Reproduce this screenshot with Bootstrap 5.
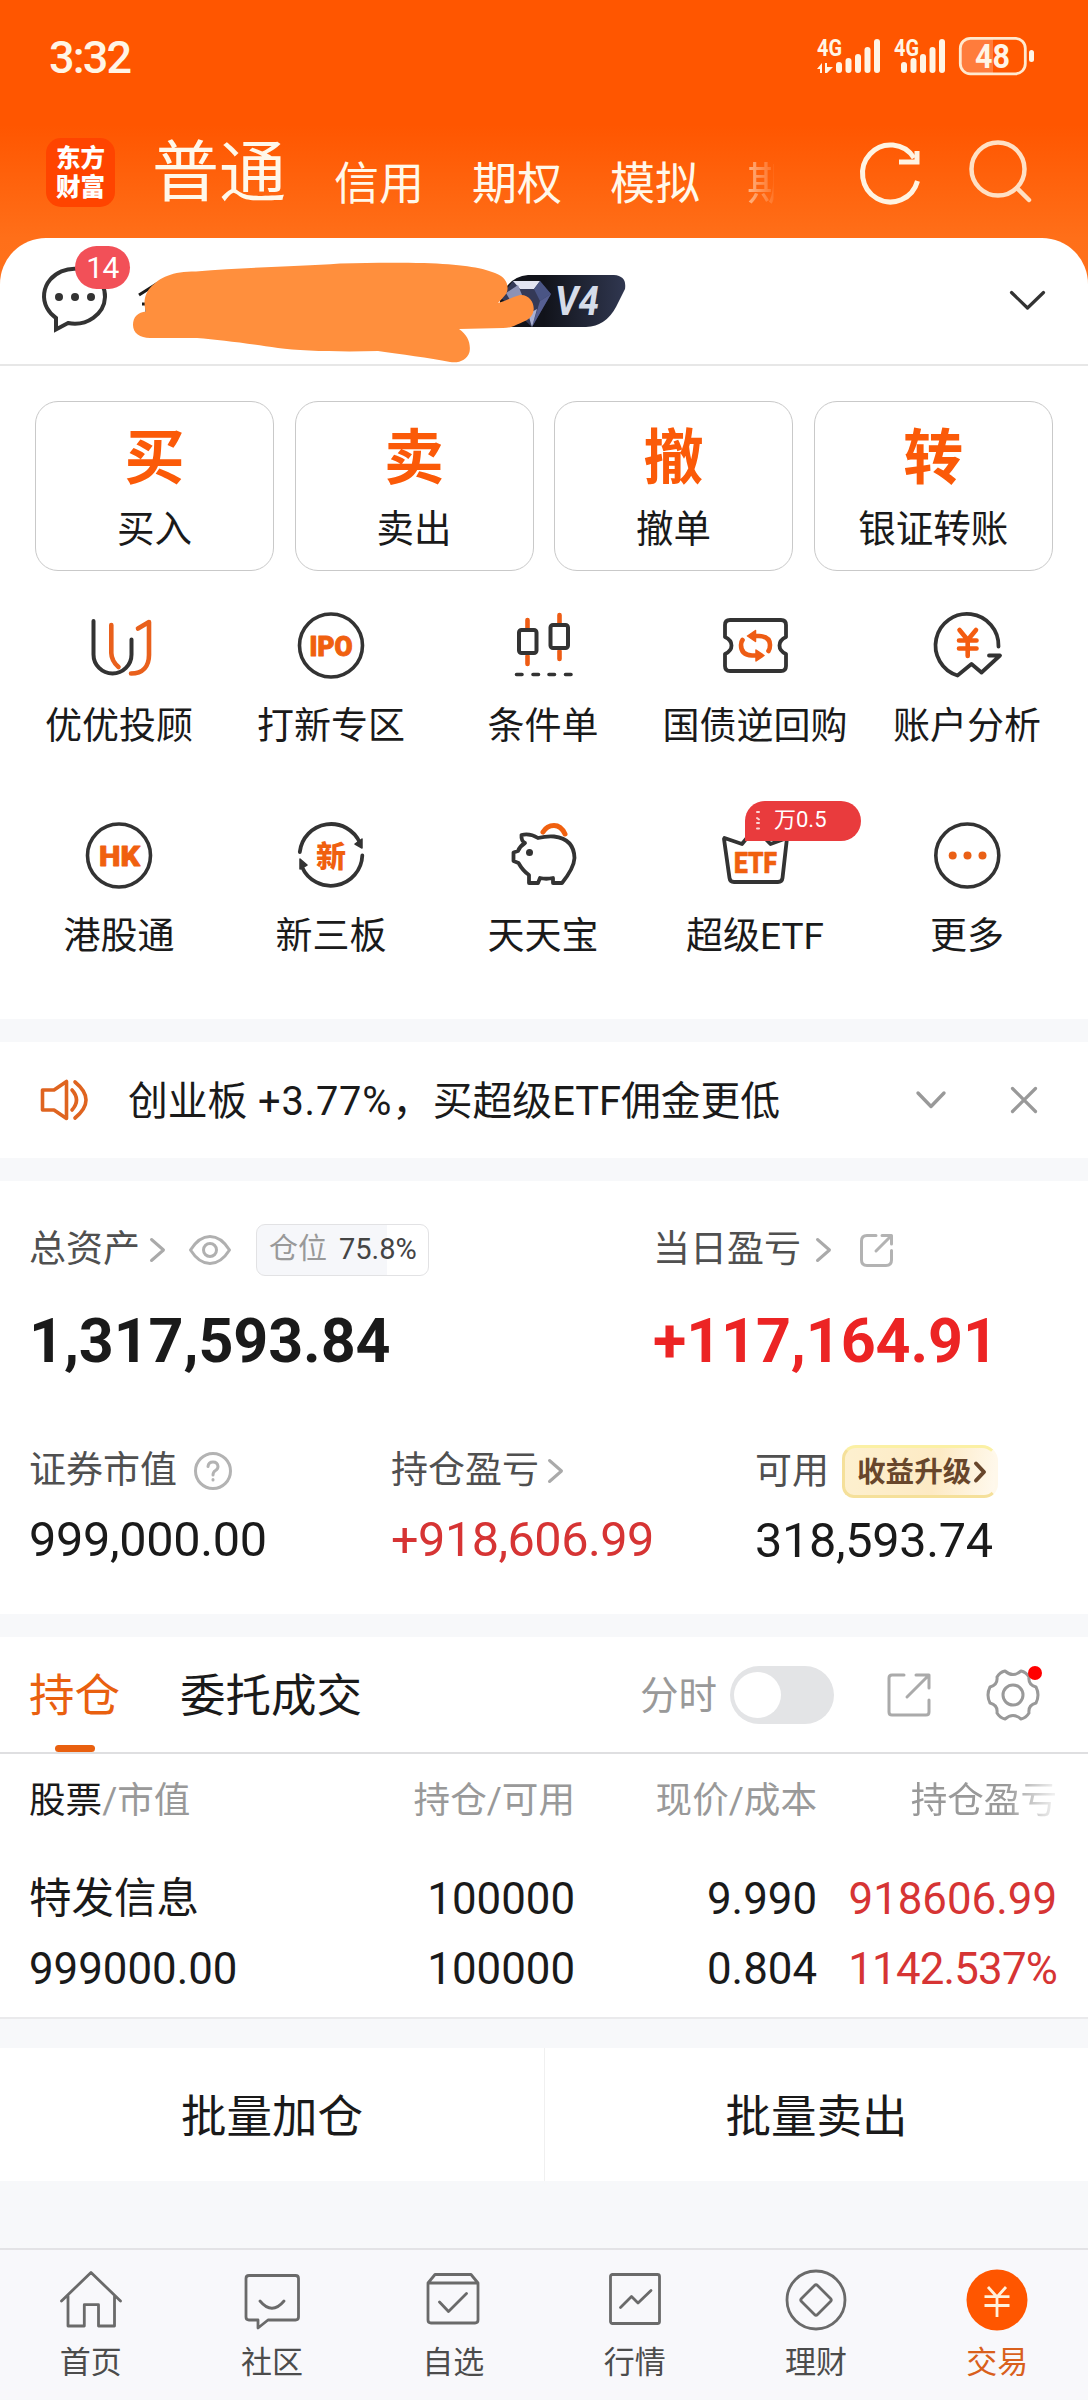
<!DOCTYPE html>
<html lang="zh-CN">
<head>
<meta charset="utf-8">
<meta name="viewport" content="width=device-width, initial-scale=1">
<title>东方财富 - 交易</title>
<link rel="stylesheet" href="https://cdn.jsdelivr.net/npm/bootstrap@5.3.0/dist/css/bootstrap.min.css">
<style>
:root{--o:#f65c0d;--ink:#1a1a1a;--g6:#505050;--g9:#999}
body{font-family:Roboto,"Noto Sans CJK SC",sans-serif;color:var(--ink);background:#f7f8fa;width:1088px;height:2400px;overflow:hidden;-webkit-font-smoothing:antialiased}
svg{display:block;flex:none;overflow:visible;fill:none;stroke-linecap:round;stroke-linejoin:round}
.top-zone{height:290px;background:linear-gradient(#ff5600 0 125px,#ff6f19 238px,#ff721c)}
.status-line{height:114px;padding:0 54px 0 49px}
.clock{font-size:45px;font-weight:500;letter-spacing:-1.8px;line-height:60px;margin-top:28px;color:#fff5e6}
.title-line{height:124px;padding:26px 0 0 46px;color:#fff8ea}
.logo-tile{width:69px;height:69px;margin-top:-2px;border-radius:15px;background:#ff4400;font-size:24.5px;line-height:29px;font-weight:900;color:#fff;padding-top:6px}
.tab-main{font-size:67px;line-height:66px;margin-left:37px;font-weight:400}
.tab-sub{font-size:45px;line-height:50px;margin-top:20px}
.tab-fade{-webkit-mask-image:linear-gradient(90deg,rgba(0,0,0,.55),rgba(0,0,0,.12) 26px,transparent 27px);mask-image:linear-gradient(90deg,rgba(0,0,0,.55),rgba(0,0,0,.12) 26px,transparent 27px)}
.sheet{margin-top:-52px;border-radius:46px 46px 0 0;height:781px}
.user-line{height:128px;border-bottom:2px solid #e7e7e7}
.msg-badge{left:75px;top:8px;width:55px;height:43px;border-radius:22px;background:#f25058;color:#fff;font-size:30px;line-height:44px;letter-spacing:-.5px}
.vip-tag{left:500px;top:37px;width:126px;height:52px}
.scribble{left:130px;top:20px}
.quick-set{padding:35px 35px 0;gap:20.5px}
.quick-box{height:170px;border:1px solid #c9c9c9;border-radius:23px}
.quick-glyph{font-size:60px;line-height:66px;font-weight:700;color:#fb5a08;margin-top:24px}
.quick-name{font-size:37.5px;line-height:50px;margin-top:12px}
.fn-set{padding:38px 15px 0 13px}
.fn-set+.fn-set{padding-top:67px}
.fn-name{font-size:37px;line-height:50px;margin-top:21px;white-space:nowrap}
.fn-flag{left:96px;top:-18px;width:116px;height:40px;border-radius:20px 20px 20px 0;background:#e93b3d;color:#fff;font-size:22px;line-height:38px;padding-left:29px}
.notice{height:116px;margin-top:23px;padding:0 51px 0 40px}
.notice-text{font-size:39.8px;line-height:56px;margin:3px 0 0 40px;white-space:nowrap}
.notice-text span{letter-spacing:.8px}
.assets{height:433px;margin-top:23px;padding:43px 0 0 29px}
.lab{font-size:37px;line-height:52px;color:var(--g6);white-space:nowrap}
.big-num{font-size:61px;line-height:70px;font-weight:700;margin-top:30px;letter-spacing:-.1px}
.mid-num{font-size:48.6px;line-height:60px;margin-top:13px;letter-spacing:-.3px}
.up{color:#ec2424}.up2{color:#d63434}
.pos-tag{margin-left:25px;width:173px;height:52px;border:1.5px solid #e2e2e4;border-radius:9px;background:linear-gradient(90deg,#f6f7fa 76%,#fff 76%);padding-left:12px;font-size:29px;line-height:48px;color:var(--g9)}
.gain-tag{margin-left:13px;width:156px;height:53px;border-radius:14px 16px 14px 12px;border:3px solid #f5e09a;border-top-color:#fbf0a4;border-right-color:#fff8ea;background:linear-gradient(100deg,#fdf0cf,#fdeac4 60%,#fff9ee);color:#68462b;font-weight:700;font-size:28.6px;line-height:46px;padding-left:12px}
.asset-row2{padding-top:69px}
.holdings{height:382px;margin-top:23px;border-bottom:2px solid #eaeaec}
.hold-head{height:117px;border-bottom:2px solid #dfdfe1;padding:0 48px 0 29px}
.hold-tab{font-size:45.5px;line-height:60px;margin-top:4px}
.hold-tab.on{color:#e9600f}
.hold-tab.on::after{content:"";left:26px;top:78px;width:40px;height:7px;border-radius:4px;background:#e9600f;position:absolute}
.toggle{width:104px;height:58px;border-radius:29px;background:#e3e4e6;padding:6px 4px}
.toggle i{display:block;width:47px;height:46px;border-radius:50%;background:#fff}
.hold-grid{display:grid;grid-template-columns:302px 244px 242px 240px;padding-left:29px}
.hold-grid>*{text-align:right;white-space:nowrap}
.hold-grid>:first-child{text-align:left}
.cap-row{font-size:36.6px;line-height:50px;color:var(--g9);margin-top:22px}
.fade-out{-webkit-mask-image:linear-gradient(90deg,#000 65%,rgba(0,0,0,.1));mask-image:linear-gradient(90deg,#000 65%,rgba(0,0,0,.1))}
.val-row{font-size:43.8px;line-height:60px}
.batch{height:133px;margin-top:29px;font-size:45.5px;line-height:140px}
.batch>div{height:133px}
.batch>div+div{border-left:1px solid #f0f0f0}
.dock{height:151px;margin-top:67px;border-top:2px solid #e3e3e6;background:#f8f8fb;color:#4c4c4c;font-size:31px;line-height:40px}
.dock svg{margin:18px auto 11px}
.dock .on{color:#d9601c}
</style>
</head>
<body>
<header class="top-zone">
  <div class="status-line d-flex justify-content-between">
    <div class="clock">3:32</div>
    <svg width="218" height="114" viewBox="816 0 218 114">
      <g fill="#fff5e6" font-family="Roboto" font-weight="700" font-size="24">
        <text x="817" y="56" textLength="25" lengthAdjust="spacingAndGlyphs">4G</text><text x="894" y="56" textLength="25" lengthAdjust="spacingAndGlyphs">4G</text>
        <path d="M817 69L822 63V73H820V69ZM825 63H827V67L833 67L827 73H825Z"/>
        <rect x="836" y="62" width="6" height="11" rx="3"/><rect x="845.500" y="58" width="6" height="15" rx="3"/><rect x="855" y="54" width="6" height="19" rx="3"/><rect x="864.500" y="47" width="6" height="26" rx="3"/><rect x="874" y="39" width="6" height="34" rx="3"/>
        <rect x="901" y="62" width="6" height="11" rx="3"/><rect x="910.500" y="58" width="6" height="15" rx="3"/><rect x="920" y="54" width="6" height="19" rx="3"/><rect x="929.500" y="47" width="6" height="26" rx="3"/><rect x="939" y="39" width="6" height="34" rx="3"/>
        <path d="M993 38V74H971a10 10 0 0 1-10-10V48a10 10 0 0 1 10-10Z" fill="#ff7c3c"/>
        <rect x="1029" y="50" width="5" height="12" rx="2.500"/>
        <text x="975" y="68" font-size="34" textLength="35" lengthAdjust="spacingAndGlyphs">48</text>
      </g>
      <rect x="960.300" y="38.300" width="65" height="35.500" rx="10" stroke="#ffe9cf" stroke-width="2.800"/>
    </svg>
  </div>
  <div class="title-line d-flex align-items-start">
    <div class="logo-tile text-center">东方<br>财富</div>
    <div class="tab-main">普通</div>
    <div class="tab-sub" style="margin-left:48px">信用</div>
    <div class="tab-sub" style="margin-left:48px">期权</div>
    <div class="tab-sub" style="margin-left:48px">模拟</div>
    <div class="tab-sub tab-fade" style="margin-left:47px">期</div>
    <svg width="62" height="66" viewBox="859 141 62 66" style="margin-left:67px" stroke="#fff3e2" stroke-width="5"><path d="M917.500 182A28 28.500 0 1 1 914 159" stroke-linecap="butt"/><path d="M917 152V163H899" stroke-linecap="butt" stroke-linejoin="miter"/></svg>
    <svg width="64" height="66" viewBox="968 141 64 66" style="margin-left:47px" stroke="#ffe0c4" stroke-width="4.500"><circle cx="998" cy="170" r="26.500"/><path d="M1017 189L1029 201"/></svg>
  </div>
</header>

<main>
<section class="sheet bg-white position-relative">
  <div class="user-line position-relative">
    <svg class="position-absolute" style="left:40px;top:24px" width="70" height="74" viewBox="40 262 70 74" stroke="#333" stroke-width="4"><path d="M56 329.500V318A30.500 27.500 0 1 1 105 297A30.500 27.500 0 0 1 68 323Z" stroke-linejoin="miter"/><g fill="#333" stroke="none"><circle cx="59" cy="297" r="4"/><circle cx="75" cy="297" r="4"/><circle cx="91" cy="297" r="4"/></g></svg>
    <div class="msg-badge position-absolute text-center">14</div>
    <svg class="vip-tag position-absolute" viewBox="500 275 126 52">
      <defs><linearGradient id="tagfill"><stop offset=".35" stop-color="#11131a"/><stop offset="1" stop-color="#303750"/></linearGradient></defs>
      <path d="M528 275H614Q627 276 625 289L616 307Q606 326 586 327H500V300Q507 277 528 275Z" fill="url(#tagfill)"/>
      <path d="M513 281H540L551 294L532 327L500 297Z" fill="#343957"/>
      <path d="M513 281H540L534 289H520Z" fill="#e2e4f2"/><path d="M506 293L518 285L524 300L510 300Z" fill="#8d92b5"/><path d="M534 289L540 281L551 294L540 301Z" fill="#4a5585"/><path d="M540 301L551 294L532 327Z" fill="#565f92"/><path d="M528 314L537 309L532 327Z" fill="#aab0d2"/>
      <text x="555" y="315" font-family="Roboto" font-size="40" font-style="italic" font-weight="700" fill="#d6dce9" textLength="44" lengthAdjust="spacingAndGlyphs">V4</text>
    </svg>
    <svg class="scribble position-absolute" width="410" height="108" viewBox="130 258 410 108">
      <path d="M139 295L158 283M142 304H148M147 308V313" stroke="#1a1a1a" stroke-width="3" stroke-linecap="butt"/>
      <path fill="#ff8f3d" d="M146 311.500C144 306 143 296 150 288C160 277 172 271.500 196 271.500C250 267 300 266.500 340 263.500C370 262.500 400 262.500 424 263C460 264.500 480 267 495 273C509 278 509 289 506 294Q502 299 498 303C506 301 512 297 520 295C529 294 535 303 533.500 311C532 320 522 322 514 326Q509 328 503 328L459 329C468 335 471 344 469.500 352C467 360 459 363.500 450 362C430 358 400 354 378 351C340 352 300 351 278 348C245 343 220 340 197 338L150 338C140 338 133 333 133 325C133 317 138 312 146 311.500Z"/>
    </svg>
    <svg class="position-absolute" style="left:1009px;top:51px" width="38" height="22" viewBox="1009 289 38 22" stroke="#333" stroke-width="3.200"><path d="M1011.500 292.500L1027.500 308L1043.500 292.500"/></svg>
  </div>

  <div class="quick-set d-flex text-center">
    <div class="quick-box flex-fill"><div class="quick-glyph">买</div><div class="quick-name">买入</div></div>
    <div class="quick-box flex-fill"><div class="quick-glyph">卖</div><div class="quick-name">卖出</div></div>
    <div class="quick-box flex-fill"><div class="quick-glyph">撤</div><div class="quick-name">撤单</div></div>
    <div class="quick-box" style="width:239.500px"><div class="quick-glyph">转</div><div class="quick-name">银证转账</div></div>
  </div>

  <div class="fn-set row g-0 row-cols-5 text-center">
    <div class="col"><svg class="mx-auto" width="72" height="72" stroke-width="4"><path stroke="#333" d="M10.500 12V45.500a19 19 0 0 0 38 0V30.500"/><path stroke="#e9601c" stroke-width="4.600" d="M28.300 16V44Q28.500 52 35.500 58M48 64.500C60 64.500 66 57 66 46V13L55 19.500"/></svg><div class="fn-name">优优投顾</div></div>
    <div class="col"><svg class="mx-auto" width="72" height="72"><circle cx="36" cy="36.500" r="31.500" stroke="#333" stroke-width="3.600"/><text x="14.500" y="46.500" font-family="Roboto" font-weight="900" font-size="28" textLength="43" lengthAdjust="spacingAndGlyphs" fill="#f0600f" stroke="#f0600f" stroke-width="1">IPO</text></svg><div class="fn-name">打新专区</div></div>
    <div class="col"><svg class="mx-auto" width="72" height="72" stroke-width="4"><g stroke="#ee5c14" stroke-width="4.600"><path d="M20.500 11V20M20.500 47V55M52.500 6V15M52.500 42V50"/></g><g stroke="#333"><rect x="12" y="21" width="17.500" height="23" rx="2.500"/><rect x="43.500" y="16" width="17.500" height="23" rx="2.500"/><path d="M9.500 65.500H15M26 65.500H31.500M42 65.500H47.500M58.500 65.500H64" stroke-width="3.600"/></g></svg><div class="fn-name">条件单</div></div>
    <div class="col"><svg class="mx-auto" width="72" height="72" stroke-width="3.800"><path stroke="#333" d="M11 11H62Q67 11 67 16V28Q60.500 31 60.500 36.500T67 45V57Q67 62 62 62H11Q6 62 6 57V45Q12.500 42 12.500 36.500T6 28V16Q6 11 11 11Z"/><g stroke="#ee5c14" stroke-width="4.600"><path d="M34 27H40Q51 27.500 51 36Q51 40 49.500 42M38 46.500H33Q22 46 22 36Q22 33 23.500 31"/></g><path fill="#ee5c14" stroke="#ee5c14" stroke-width="1.500" d="M36.500 21.500V32.500L28.500 27ZM37 41V52L45 46.500Z"/></svg><div class="fn-name">国债逆回购</div></div>
    <div class="col"><svg class="mx-auto" width="72" height="72" stroke-width="3.800"><path stroke="#333" d="M67.500 37.500A31.500 31.500 0 1 0 26.500 66.500L40.500 55L50.500 63.500L69 46.500H58"/><path stroke="#f45c10" stroke-width="4.600" d="M28.500 21L36.700 31L45 21M36.700 31V47M28 31.500H45.500M28 39.500H45.500"/></svg><div class="fn-name">账户分析</div></div>
  </div>
  <div class="fn-set row g-0 row-cols-5 text-center">
    <div class="col"><svg class="mx-auto" width="72" height="72"><circle cx="36" cy="36.500" r="31.500" stroke="#333" stroke-width="3.600"/><text x="16" y="46.500" font-family="Roboto" font-weight="900" font-size="28" textLength="41" lengthAdjust="spacingAndGlyphs" fill="#f0600f" stroke="#f0600f" stroke-width=".8">HK</text></svg><div class="fn-name">港股通</div></div>
    <div class="col"><svg class="mx-auto" width="72" height="72"><g stroke="#333" stroke-width="3.800"><path d="M4.800 33A31.500 31.500 0 0 1 65 24M67.300 36.500A31.500 31.500 0 0 1 7 48"/></g><path fill="#333" stroke="#333" stroke-width="1.500" d="M60 25L67 20V29ZM5 40L12 46L5 50Z"/><text x="36" y="47.500" text-anchor="middle" font-family="Noto Sans CJK SC" font-weight="900" font-size="30" fill="#f0600f">新</text></svg><div class="fn-name">新三板</div></div>
    <div class="col"><svg class="mx-auto" width="72" height="72" stroke-width="3.800"><path stroke="#333" d="M18 24Q14 22 14.500 16Q23 14 31 19Q39 17 47 17.500Q67 20 67.500 39Q67 49 55 64H46V59Q39 60.500 33 59L31 64H22V56Q16 52 11.500 44L6.500 42V33.500L11 32Q13 27 18 24Z"/><circle cx="22.500" cy="33.500" r="3.500" fill="#333"/><path stroke="#f0600f" stroke-width="5" d="M36 13Q40 6.500 47 6.500T58 15"/></svg><div class="fn-name">天天宝</div></div>
    <div class="col position-relative"><svg class="mx-auto" width="72" height="72"><path stroke="#333" stroke-width="3.800" d="M5.500 19L23 25L36 9L51.500 25L68 19L63.500 59Q63 63 59 63H15Q11 63 10.500 59L5 20"/><text x="15" y="53.500" font-family="Roboto" font-weight="900" font-size="29.500" textLength="43" lengthAdjust="spacingAndGlyphs" fill="#f0600f" stroke="#f0600f" stroke-width=".6">ETF</text></svg><div class="fn-name">超级ETF</div><div class="fn-flag position-absolute text-start">万0.5<svg class="position-absolute" style="left:11px;top:10px" width="4" height="19" stroke="#fbd5d5" stroke-width="2"><path d="M1 1H3M1 7L3 8.500M1 12H3M1 17.500H3"/></svg></div></div>
    <div class="col"><svg class="mx-auto" width="72" height="72"><circle cx="36.300" cy="36.500" r="31.500" stroke="#333" stroke-width="3.600"/><g fill="#ea6016"><circle cx="21.700" cy="36.500" r="4"/><circle cx="36.500" cy="36.500" r="4"/><circle cx="51.500" cy="36.500" r="4"/></g></svg><div class="fn-name">更多</div></div>
  </div>
</section>

<section class="notice bg-white d-flex align-items-center">
  <svg width="48" height="44" viewBox="40 1078 48 44" stroke="#df6420" stroke-width="3.600"><path d="M42.500 1090H54L66.500 1081.500V1118.500L54 1110H42.500ZM72 1090Q81 1100 72 1110M75 1082Q97 1100 75 1118"/></svg>
  <div class="notice-text">创业板<span> +3.77%，</span>买超级ETF佣金更低</div>
  <svg class="ms-auto" width="30" height="18" stroke="#999" stroke-width="3.400"><path d="M2 2L15 15.500L28 2"/></svg>
  <svg width="26" height="26" style="margin-left:65px" stroke="#999" stroke-width="3.200"><path d="M1.500 1.500L24.500 24.500M24.500 1.500L1.500 24.500"/></svg>
</section>

<section class="assets bg-white">
  <div class="d-flex">
    <div style="width:624px">
      <div class="d-flex align-items-center lab">总资产
        <svg width="15" height="24" style="margin-left:10px" stroke="#aaa" stroke-width="3"><path d="M1.500 1.500L13.500 12L1.500 22.500"/></svg>
        <svg width="42" height="30" style="margin-left:24px" stroke="#b0b0b0" stroke-width="3"><path d="M1.500 15Q10 1.500 21 1.500T40.500 15Q32 28.500 21 28.500T1.500 15Z"/><circle cx="21" cy="15" r="6.500"/></svg>
        <div class="pos-tag">仓位<span style="margin-left:12px;color:#444">75.8%</span></div>
      </div>
      <div class="big-num">1,317,593.84</div>
    </div>
    <div>
      <div class="d-flex align-items-center lab">当日盈亏
        <svg width="15" height="24" style="margin-left:15px" stroke="#aaa" stroke-width="3"><path d="M1.500 1.500L13.500 12L1.500 22.500"/></svg>
        <svg width="33" height="33" style="margin-left:29px" stroke="#b3b3b3" stroke-width="3"><path d="M16 1.500H7Q1.500 1.500 1.500 7V26Q1.500 31.500 7 31.500H26Q31.500 31.500 31.500 26V16.500M22 1.500H31.500V10M31 2L16 17"/></svg>
      </div>
      <div class="big-num up">+117,164.91</div>
    </div>
  </div>
  <div class="d-flex asset-row2">
    <div style="width:362px">
      <div class="d-flex align-items-center lab">证券市值<svg width="38" height="38" style="margin-left:17px" stroke="#b3b3b3" stroke-width="3"><circle cx="19" cy="19" r="17.500"/><path d="M14 14.500Q14.500 10 19 10T24 14.500Q24 17 21.500 18.500T19 23M19 27.500V28"/></svg></div>
      <div class="mid-num">999,000.00</div>
    </div>
    <div style="width:364px">
      <div class="d-flex align-items-center lab">持仓盈亏<svg width="15" height="24" style="margin-left:9px" stroke="#aaa" stroke-width="3"><path d="M1.500 1.500L13.500 12L1.500 22.500"/></svg></div>
      <div class="mid-num up2" style="letter-spacing:-.5px">+918,606.99</div>
    </div>
    <div>
      <div class="d-flex align-items-center lab">可用<div class="gain-tag d-flex align-items-center">收益升级<svg width="12" height="20" style="margin-left:3px" stroke="#68462b" stroke-width="4"><path d="M2 1.500L10 10L2 18.500"/></svg></div></div>
      <div class="mid-num">318,593.74</div>
    </div>
  </div>
</section>

<section class="holdings bg-white">
  <div class="hold-head d-flex align-items-center">
    <div class="hold-tab on position-relative">持仓</div>
    <div class="hold-tab" style="margin-left:60px">委托成交</div>
    <div class="ms-auto" style="font-size:38.500px;color:#999;margin-top:3px">分时</div>
    <div class="toggle" style="margin-left:13px"><i></i></div>
    <svg width="44" height="44" style="margin-left:53px" stroke="#aaa" stroke-width="3"><path d="M17 2H5Q2 2 2 5V39Q2 42 5 42H39Q42 42 42 39V27M29 2H42V15M41 3L20 24"/></svg>
    <svg width="54" height="54" viewBox="-27 -27 54 54" style="margin-left:55px" stroke="#999" stroke-width="3"><path d="M-8 -24Q0 -17 8 -24Q13 -23 16 -18Q15 -10 23 -8Q27 0 23 8Q15 10 16 18Q13 23 8 24Q0 17 -8 24Q-13 23 -16 18Q-15 10 -23 8Q-27 0 -23 -8Q-15 -10 -16 -18Q-13 -23 -8 -24Z"/><circle r="10"/><circle cx="22" cy="-22" r="7" fill="#f00" stroke="none"/></svg>
  </div>
  <div class="hold-grid cap-row"><div><span style="color:#1a1a1a">股票</span>/市值</div><div>持仓/可用</div><div>现价/成本</div><div><span class="fade-out d-inline-block">持仓盈亏</span></div></div>
  <div class="hold-grid val-row" style="margin-top:43px"><div style="font-size:42.500px">特发信息</div><div>100000</div><div>9.990</div><div class="up2">918606.99</div></div>
  <div class="hold-grid val-row" style="margin-top:10px"><div>999000.00</div><div>100000</div><div>0.804</div><div class="up2" style="letter-spacing:-.8px">1142.537%</div></div>
</section>

<section class="batch bg-white d-flex text-center"><div class="w-50">批量加仓</div><div class="w-50">批量卖出</div></section>
</main>

<nav class="dock row g-0 row-cols-6 text-center">
  <div class="col"><svg width="64" height="64" stroke="#6a6a6a" stroke-width="2.800"><path d="M2.500 33L32 4.500L61.500 33M9 28V58H25.300V36.700H39.500V58H55.500V28"/></svg>首页</div>
  <div class="col"><svg width="64" height="64" stroke="#6a6a6a" stroke-width="2.800"><path d="M9 7.500H55.500Q58.500 7.500 58.500 10.500V49Q58.500 52 55.500 52H28L18 60V52H9Q6 52 6 49V10.500Q6 7.500 9 7.500ZM20 33Q32 47.500 44 33"/></svg>社区</div>
  <div class="col"><svg width="64" height="64" stroke="#6a6a6a" stroke-width="2.800"><path d="M7 15L14 6.500H50L57 15V52Q57 55 54 55H10Q7 55 7 52ZM7 15H57M18.500 34L27.500 43.500L45.500 25.500"/></svg>自选</div>
  <div class="col"><svg width="64" height="64" stroke="#6a6a6a" stroke-width="2.800"><rect x="7.500" y="6.500" width="49" height="49" rx="2"/><path d="M17.500 39.500L28.500 28.500L35 35L48 22.500"/></svg>行情</div>
  <div class="col"><svg width="64" height="64" stroke="#6a6a6a" stroke-width="2.800"><circle cx="32" cy="32" r="29"/><path d="M30.500 17.500Q32 16 33.500 17.500L46.500 30.500Q48 32 46.500 33.500L33.500 46.500Q32 48 30.500 46.500L17.500 33.500Q16 32 17.500 30.500Z"/></svg>理财</div>
  <div class="col on"><svg width="64" height="64"><circle cx="32" cy="32" r="30.500" fill="#ff5600"/><path stroke="#fff1dc" stroke-width="2.800" stroke-linecap="butt" d="M23 19L32 29L41 19M32 29V49M19.500 28.700H44.500M19.500 37.500H44.500"/></svg>交易</div>
</nav>
<script src="https://cdn.jsdelivr.net/npm/bootstrap@5.3.0/dist/js/bootstrap.bundle.min.js"></script>
</body>
</html>
